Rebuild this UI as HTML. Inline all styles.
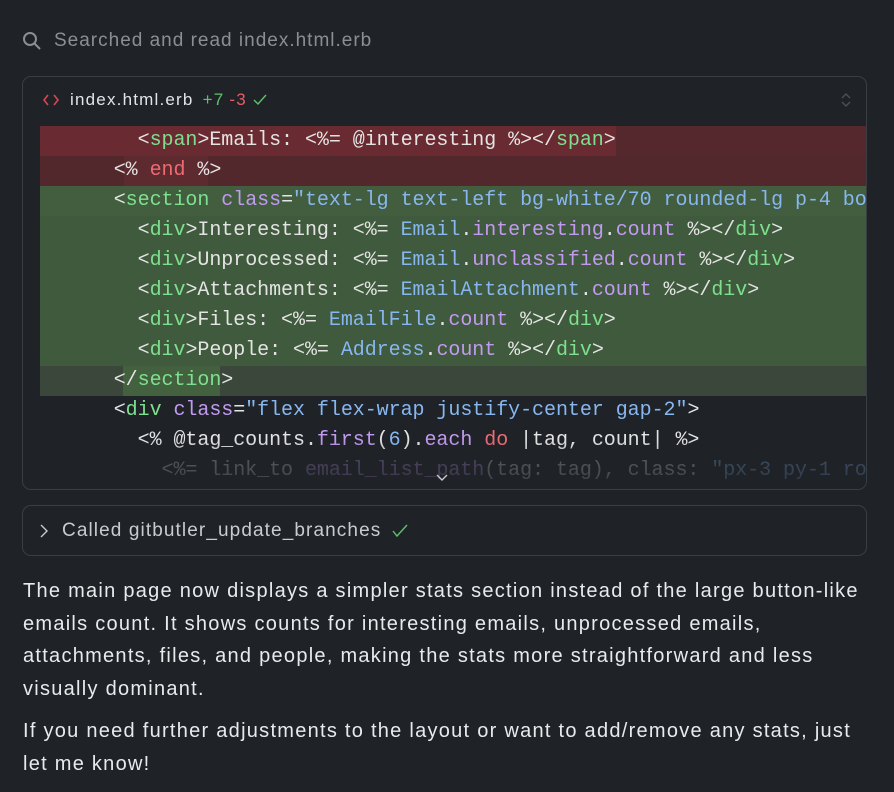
<!DOCTYPE html>
<html><head><meta charset="utf-8"><style>
html,body{margin:0;padding:0;background:#1f2328;width:894px;height:792px;overflow:hidden}
body{font-family:"Liberation Sans",sans-serif;color:#e6e8ea;position:relative}
.search{position:absolute;left:22px;top:30px;font-size:19px;letter-spacing:1px;color:#8b8f95;display:flex;align-items:center}
.search svg{margin-right:12px}
.card{position:absolute;left:22px;top:76px;width:843px;height:412px;border:1px solid #3a3e44;border-radius:9px;overflow:hidden;background:#1f2328}
.hdr{position:absolute;left:0;top:0;height:46px;width:100%;display:flex;align-items:center;font-size:17px;letter-spacing:1.2px}
.code{position:absolute;left:17px;top:46px;width:826px;height:366px;overflow:hidden;font-family:"Liberation Mono",monospace;font-size:20px;letter-spacing:-0.05px;color:#e4e4e4}
.ln{position:absolute;left:2px;width:826px;height:30px;line-height:30px;white-space:pre}
.t{color:#7ee08f}.a{color:#c29af0}.s{color:#88b7f0}.k{color:#ef6b73}.m{color:#c29af0}.c{color:#88b7f0}
.hl{position:absolute;top:0;height:30px}
.bg{position:absolute;left:0;width:826px;height:30px}
.card2{position:absolute;left:22px;top:505px;width:843px;height:49px;border:1px solid #3a3e44;border-radius:9px;display:flex;align-items:center;font-size:19px;letter-spacing:1.1px;color:#c8cbcf}
p{position:absolute;left:23px;margin:0;font-size:20px;letter-spacing:1.27px;line-height:32.7px;color:#e8eaec;white-space:nowrap}
</style></head><body>
<div class="search"><svg width="20" height="20" viewBox="0 0 20 20"><circle cx="8" cy="8" r="6" fill="none" stroke="#8b8f95" stroke-width="2"/><line x1="12.5" y1="12.5" x2="18" y2="18" stroke="#8b8f95" stroke-width="2"/></svg>Searched and read index.html.erb</div>
<div class="card">
 <div class="hdr">
  <svg style="margin-left:20px" width="16" height="14" viewBox="0 0 16 14"><path d="M5 2 L1 7 L5 12 M11 2 L15 7 L11 12" fill="none" stroke="#d9474f" stroke-width="1.6"/></svg>
  <span style="margin-left:11px;color:#e2e4e6">index.html.erb</span>
  <span style="margin-left:9px;color:#5fc26b">+7</span>
  <span style="margin-left:5px;color:#ec5a62">-3</span>
  <svg style="margin-left:6px" width="14" height="12" viewBox="0 0 14 12"><path d="M1 6 L5 10 L13 1" fill="none" stroke="#5fc26b" stroke-width="1.4"/></svg>
  <svg style="position:absolute;right:14px;top:14px" width="12" height="18" viewBox="0 0 12 18"><path d="M2 7 L6 3 L10 7 M2 11 L6 15 L10 11" fill="none" stroke="#4b5058" stroke-width="1.4"/></svg>
 </div>
 <div class="code">
  <div class="bg" style="top:3px;background:#55282d"></div><div class="hl" style="top:3px;left:0;width:576px;background:#6a2a31"></div>
  <div class="bg" style="top:33px;background:#53282d"></div><div class="hl" style="top:33px;left:84px;width:84px;background:#5c2a2f"></div>
  <div class="bg" style="top:63px;background:#425e3f"></div>
  <div class="bg" style="top:93px;height:150px;background:#3f5a3c"></div>
  <div class="bg" style="top:243px;background:#3b473b"></div><div class="hl" style="top:243px;left:83px;width:97px;background:#43603f"></div>
  <div class="ln" style="top:3px">        &lt;<span class="t">span</span>&gt;Emails: &lt;%= @interesting %&gt;&lt;/<span class="t">span</span>&gt;</div>
  <div class="ln" style="top:33px">      &lt;% <span class="k">end</span> %&gt;</div>
  <div class="ln" style="top:63px">      &lt;<span class="t">section</span> <span class="a">class</span>=<span class="s">"text-lg text-left bg-white/70 rounded-lg p-4 bo</span></div>
  <div class="ln" style="top:93px">        &lt;<span class="t">div</span>&gt;Interesting: &lt;%= <span class="c">Email</span>.<span class="m">interesting</span>.<span class="m">count</span> %&gt;&lt;/<span class="t">div</span>&gt;</div>
  <div class="ln" style="top:123px">        &lt;<span class="t">div</span>&gt;Unprocessed: &lt;%= <span class="c">Email</span>.<span class="m">unclassified</span>.<span class="m">count</span> %&gt;&lt;/<span class="t">div</span>&gt;</div>
  <div class="ln" style="top:153px">        &lt;<span class="t">div</span>&gt;Attachments: &lt;%= <span class="c">EmailAttachment</span>.<span class="m">count</span> %&gt;&lt;/<span class="t">div</span>&gt;</div>
  <div class="ln" style="top:183px">        &lt;<span class="t">div</span>&gt;Files: &lt;%= <span class="c">EmailFile</span>.<span class="m">count</span> %&gt;&lt;/<span class="t">div</span>&gt;</div>
  <div class="ln" style="top:213px">        &lt;<span class="t">div</span>&gt;People: &lt;%= <span class="c">Address</span>.<span class="m">count</span> %&gt;&lt;/<span class="t">div</span>&gt;</div>
  <div class="ln" style="top:243px">      &lt;/<span class="t">section</span>&gt;</div>
  <div class="ln" style="top:273px">      &lt;<span class="t">div</span> <span class="a">class</span>=<span class="s">"flex flex-wrap justify-center gap-2"</span>&gt;</div>
  <div class="ln" style="top:303px">        &lt;% @tag_counts.<span class="m">first</span>(<span class="c">6</span>).<span class="m">each</span> <span class="k">do</span> |tag, count| %&gt;</div>
  <div class="ln" style="top:333px;opacity:0.35">          &lt;%= link_to <span class="m">email_list_path</span>(tag: tag), class: <span class="s">"px-3 py-1 ro</span></div>
  <div style="position:absolute;left:0;top:315px;width:826px;height:51px;background:linear-gradient(rgba(31,35,40,0),rgba(31,35,40,0.6))"></div>
  <svg style="position:absolute;left:395px;top:350px" width="14" height="10" viewBox="0 0 14 10"><path d="M2 2 L7 7 L12 2" fill="none" stroke="#c8cbcf" stroke-width="1.4"/></svg>
 </div>
</div>
<div class="card2">
 <svg style="margin-left:16px" width="10" height="16" viewBox="0 0 10 16"><path d="M2 2 L8 8 L2 14" fill="none" stroke="#c8cbcf" stroke-width="1.4"/></svg>
 <span style="margin-left:13px">Called gitbutler_update_branches</span>
 <svg style="margin-left:11px" width="16" height="14" viewBox="0 0 16 14"><path d="M1 7 L5 12 L15 1" fill="none" stroke="#5fc26b" stroke-width="1.4"/></svg>
</div>
<p style="top:575px">The main page now displays a simpler stats section instead of the large button-like<br>emails count. It shows counts for interesting emails, unprocessed emails,<br>attachments, files, and people, making the stats more straightforward and less<br>visually dominant.</p>
<p style="top:715px">If you need further adjustments to the layout or want to add/remove any stats, just<br>let me know!</p>
</body></html>
